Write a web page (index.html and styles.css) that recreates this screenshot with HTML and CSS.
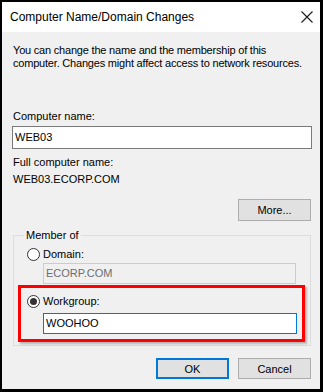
FILE: index.html
```html
<!DOCTYPE html>
<html>
<head>
<meta charset="utf-8">
<link rel="stylesheet" href="styles.css">
</head>
<body>
<div class="dialog">
  <div class="titlebar">
    <span class="title">Computer Name/Domain Changes</span>
    <svg class="close" width="12" height="12" viewBox="0 0 12 12"><path d="M0.5 0.5 L11.5 11.5 M11.5 0.5 L0.5 11.5" stroke="#1a1a1a" stroke-width="1.1" fill="none"/></svg>
  </div>
  <div class="content">
    <p class="intro">You can change the name and the membership of this<br>computer. Changes might affect access to network resources.</p>
    <div class="label first">Computer name:</div>
    <div class="input tall">WEB03</div>
    <div class="label full">Full computer name:</div>
    <div class="label value">WEB03.ECORP.COM</div>
    <div class="more-row"><div class="btn more">More...</div></div>
    <div class="group">
      <span class="legend">Member of</span>
      <div class="radio-row domain"><span class="radio"></span>Domain:</div>
      <div class="input disabled domain-input">ECORP.COM</div>
      <div class="highlight">
        <div class="radio-row"><span class="radio checked"></span>Workgroup:</div>
        <div class="input focused wg-input">WOOHOO</div>
      </div>
    </div>
    <div class="actions">
      <div class="btn default">OK</div>
      <div class="btn">Cancel</div>
    </div>
  </div>
</div>
</body>
</html>
```
FILE: styles.css
```css
* { box-sizing: border-box; }
html, body { margin: 0; padding: 0; background: #000; }
body { width: 323px; height: 392px; overflow: hidden; }
.dialog {
  width: 323px; height: 392px;
  border-style: solid; border-color: #000;
  border-width: 2px 3px 3px 2px;
  background: #f0f0f0;
  font-family: "Liberation Sans", Arial, sans-serif;
  font-size: 11px; color: #000;
  display: flex; flex-direction: column;
}
.titlebar {
  height: 30px; background: #fff;
  display: flex; align-items: center; justify-content: space-between;
  padding: 0 7px 1px 8px;
}
.title { font-family: "Liberation Sans", Arial, sans-serif; font-size: 12px; color: #000; }
.close { display: block; }
.content { padding: 0 8px 0 10px; display: flex; flex-direction: column; }
.intro { margin: 12px 0 0 1px; line-height: 13px; white-space: nowrap; letter-spacing: -0.2px; }
.label { line-height: 13px; margin-left: 1px; }
.label.first { margin-top: 40px; }
.label.full { margin-top: 7px; }
.label.value { margin-top: 4px; }
.input {
  background: #fff; border: 1px solid #7a7a7a;
  height: 21px; line-height: 19px; padding-left: 2px;
}
.input.tall { height: 23px; line-height: 21px; margin-top: 3px; }
.input.disabled { background: #f0f0f0; border-color: #cccccc; color: #6d6d6d; }
.input.focused { border-color: #0078d7; }
.more-row { display: flex; justify-content: flex-end; margin-top: 13px; padding-right: 1px; }
.btn {
  width: 73px; height: 21px; background: #e1e1e1;
  border: 1px solid #adadad;
  display: flex; align-items: center; justify-content: center;
}
.btn.more { height: 22px; }
.btn.default { border: 2px solid #0078d7; }
.group {
  margin: 14px 1px 0 1px;
  border: 1px solid #dcdcdc;
  padding: 0 5px 0 4px;
  display: flex; flex-direction: column;
}
.legend {
  align-self: flex-start;
  margin: -7px 0 0 6px; padding: 0 2px;
  line-height: 13px; background: #f0f0f0;
}
.radio-row { display: flex; align-items: center; line-height: 13px; height: 13px; }
.radio-row.domain { margin-top: 6px; padding-left: 9px; }
.radio {
  width: 13px; height: 13px; border-radius: 50%;
  border: 1px solid #333; background: #fff; margin-right: 3px;
  display: flex; align-items: center; justify-content: center;
}
.radio.checked::after {
  content: ""; width: 7px; height: 7px; border-radius: 50%; background: #333;
}
.domain-input { margin: 2px 9px 0 25px; }
.highlight {
  margin-top: 1px;
  border: 3px solid #ff0000;
  padding: 7px 0 5px 6px;
  box-shadow: 2px 2px 2px rgba(0,0,0,0.25);
  margin-bottom: 3px;
}
.wg-input { margin: 5px 5px 0 16px; }
.actions { display: flex; justify-content: flex-end; gap: 9px; margin: 12px 1px 0 0; }
```
